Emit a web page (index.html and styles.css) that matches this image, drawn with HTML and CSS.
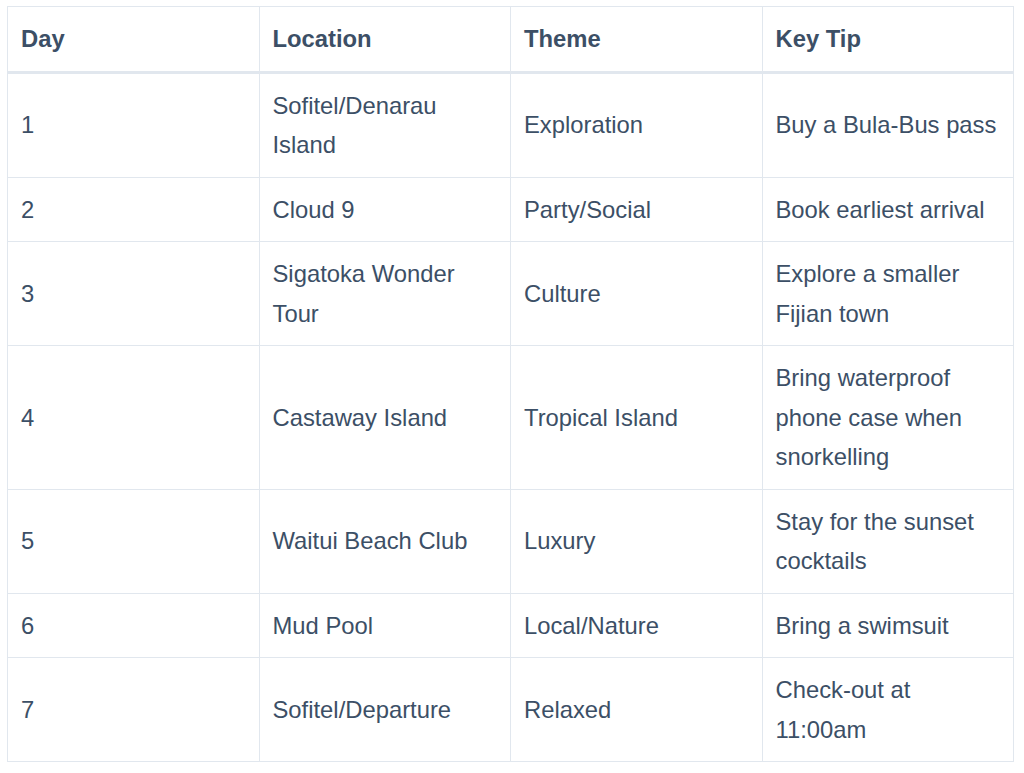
FILE: index.html
```html
<!DOCTYPE html>
<html>
<head>
<meta charset="utf-8">
<link rel="stylesheet" href="styles.css">
</head>
<body>
<table class="itinerary">
  <thead>
    <tr><th>Day</th><th>Location</th><th>Theme</th><th>Key Tip</th></tr>
  </thead>
  <tbody>
    <tr><td>1</td><td>Sofitel/Denarau Island</td><td>Exploration</td><td>Buy a Bula-Bus pass</td></tr>
    <tr><td>2</td><td>Cloud 9</td><td>Party/Social</td><td>Book earliest arrival</td></tr>
    <tr><td>3</td><td>Sigatoka Wonder Tour</td><td>Culture</td><td>Explore a smaller Fijian town</td></tr>
    <tr><td>4</td><td>Castaway Island</td><td>Tropical Island</td><td>Bring waterproof phone case when snorkelling</td></tr>
    <tr><td>5</td><td>Waitui Beach Club</td><td>Luxury</td><td>Stay for the sunset cocktails</td></tr>
    <tr><td>6</td><td>Mud Pool</td><td>Local/Nature</td><td>Bring a swimsuit</td></tr>
    <tr><td>7</td><td>Sofitel/Departure</td><td>Relaxed</td><td>Check-out at 11:00am</td></tr>
  </tbody>
</table>
</body>
</html>
```
FILE: styles.css
```css
html, body {
  background: #ffffff;
}
body {
  margin: 6px 10px 0 7px;
  font-family: "Liberation Sans", Arial, Helvetica, sans-serif;
  color: #3c4f66;
}
.itinerary {
  width: 1007px;
  table-layout: fixed;
  border-collapse: collapse;
  font-size: 23.8px;
  line-height: 39.5px;
}
.itinerary th,
.itinerary td {
  border: 1px solid #e1e7ee;
  padding: 12px 13px 12px 13px;
  text-align: left;
  vertical-align: middle;
}
.itinerary th {
  font-weight: bold;
  border-bottom: 3px solid #e1e7ee;
}
```
